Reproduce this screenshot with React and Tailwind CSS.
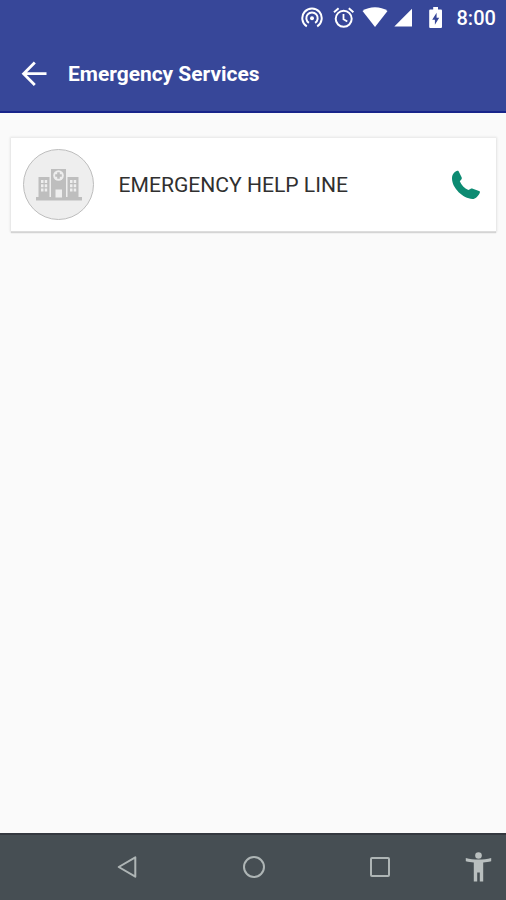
import React from 'react'

function StatusBar() {
  return (
    <div className="flex h-9 items-center pl-[301px] text-white">
      <svg className="h-[22px] w-[22px] shrink-0" viewBox="0 0 22 22" fill="none" stroke="currentColor" strokeWidth="2">
        <path d="M5.8 19.3A9.7 9.7 0 1 1 16.2 19.3" />
        <path d="M7.9 15.9A5.7 5.7 0 1 1 14.1 15.9" />
        <circle cx="11" cy="11.2" r="2" fill="currentColor" stroke="none" />
      </svg>
      <svg className="ml-[10px] h-[22px] w-[22px] shrink-0" viewBox="0 0 22 22" fill="none" stroke="currentColor" strokeWidth="2">
        <circle cx="10.7" cy="11.8" r="8" />
        <path d="M1 5.2 5.6 1.3M20.4 5.2 15.8 1.3" />
        <path d="M10.5 7V12.2L14.3 14.5" strokeWidth="1.8" />
      </svg>
      <svg className="ml-[7px] h-[22px] w-[26px] shrink-0" viewBox="0 0 26 22" fill="currentColor">
        <path d="M.5 4C4 1.300 8.300.2 13 .2s9 1.100 12.500 3.800L13 20Z" />
      </svg>
      <svg className="ml-[6px] h-[20px] w-[18px] shrink-0" viewBox="0 0 18 20" fill="currentColor">
        <path d="M.3 18.500 18 .8v17.700Z" />
      </svg>
      <svg className="ml-[17px] h-[22px] w-[14px] shrink-0" viewBox="0 0 14 22" fill="currentColor">
        <path fillRule="evenodd" d="M4.200 0h4.800v2.400h2.700c.8 0 1.300.5 1.300 1.300v16c0 .8-.5 1.300-1.300 1.300H1.500C.7 21 .2 20.500.2 19.700v-16c0-.8.5-1.300 1.300-1.300h2.700ZM7.600 5.800 3.200 12.800h2.700v5L10.200 10.800H7.600Z" />
      </svg>
      <span className="ml-[13.500px] text-[20px] leading-none font-medium">8:00</span>
    </div>
  )
}

function Header() {
  return (
    <header className="h-[113px] border-b-2 border-[#18248a] bg-[#374799]">
      <StatusBar />
      <div className="flex h-[76px] items-center pl-[21px] text-white">
        <svg className="h-[26px] w-[26px]" viewBox="0 0 26 26" fill="none" stroke="currentColor" strokeWidth="2.8">
          <path d="M25.500 12.700H3M13.800 1.500 2.600 12.700l11.200 11.200" />
        </svg>
        <h1 className="ml-[21px] pt-[2px] text-[20.950px] font-bold whitespace-nowrap">Emergency Services</h1>
      </div>
    </header>
  )
}

function HospitalIcon() {
  return (
    <svg className="mt-[3px] h-[34px] w-[46px]" viewBox="0 0 46 34" fill="#bebebe">
      <path d="M15 0h15v29H15ZM2.500 8H13.500v20.500H2.500ZM31.500 8h11v20.500h-11ZM0 28h46v3.500H0Z" />
      <circle cx="22.500" cy="6.500" r="5.300" fill="#eee" />
      <path d="M21.200 3.200h2.600v2h2v2.600h-2v2h-2.600v-2h-2V5.200h2Z" />
      <path fill="#eee" d="M19.500 20.500H26V28.500h-6.500ZM5 11h2.500v3H5ZM8.700 11h2.500v3H8.700ZM5 15.300h2.500v3H5ZM8.700 15.300h2.500v3H8.700ZM5 19.600h2.500v3H5ZM8.700 19.600h2.500v3H8.700ZM34 11h2.500v3H34ZM37.700 11h2.500v3h-2.500ZM34 15.300h2.500v3H34ZM37.700 15.300h2.500v3h-2.500ZM34 19.600h2.500v3H34ZM37.700 19.600h2.500v3h-2.500Z" />
    </svg>
  )
}

function ServiceCard({ name }) {
  return (
    <div className="flex h-[93px] items-center bg-white pr-[15px] pl-3 shadow-[0_0_2px_1px_#e5e5e5,0_2px_1px_#cccccc]">
      <div className="flex h-[71px] w-[71px] items-center justify-center rounded-full border border-[#bdbdbd] bg-[#eeeeee]">
        <HospitalIcon />
      </div>
      <span className="ml-[24.500px] text-[21.100px] whitespace-nowrap text-[#303030]">{name}</span>
      <svg className="ml-auto h-[30px] w-[30px]" viewBox="0 0 30 30" fill="#0c8b72">
        <path d="M2 4.200C3 2.500 4.700 1.200 6.200.8c1-.2 1.500.3 1.800 1.200l2.600 5.300c.5 1 .2 1.800-.5 2.500l-1.300 1.400c1.700 4 4.500 6.800 8.600 8.900l2-1.200c.8-.5 1.500-.6 2.400-.2l6.200 2.400c1 .4 1.200 1 .7 1.900-1.500 3.300-4.300 6-7.200 6C12 28.500 1 18 1 8.500c0-1.600.2-3 1-4.300Z" />
      </svg>
    </div>
  )
}

function NavigationBar() {
  return (
    <nav className="h-[67px] border-t-2 border-[#34383f] bg-[#464e53]">
      <div className="flex h-[64px] items-center pl-[117px]">
        <svg className="h-6 w-5" viewBox="0 0 20 24" fill="none" stroke="#aeb5b5" strokeWidth="2" strokeLinejoin="round">
          <path d="M18.300 2.300v19.400L1.700 12Z" />
        </svg>
        <span className="ml-[106px] h-[22px] w-[22px] rounded-full border-2 border-[#aeb5b5]" />
        <span className="ml-[105px] h-5 w-5 rounded-[2px] border-2 border-[#aeb5b5]" />
        <svg className="ml-[75px] h-[30px] w-[28px]" viewBox="0 0 28 30" fill="#b9bfbf">
          <circle cx="13.500" cy="3.500" r="3.300" />
          <path d="M.8 6c8 2 17.400 2 25.400 0v3.200c-3 .7-5 1-8 1.300V29.500h-3.400V20.500h-2.600v9H8.800V10.500C5.800 10.200 3.800 9.900.8 9.200Z" />
        </svg>
      </div>
    </nav>
  )
}

function App() {
  return (
    <div className="flex h-[900px] w-[506px] flex-col overflow-hidden bg-[#fafafa] font-[Roboto,sans-serif]">
      <Header />
      <main className="flex-1 pt-[25px] pr-[10px] pl-[11px]">
        <ServiceCard name="EMERGENCY HELP LINE" />
      </main>
      <NavigationBar />
    </div>
  )
}

export default App
